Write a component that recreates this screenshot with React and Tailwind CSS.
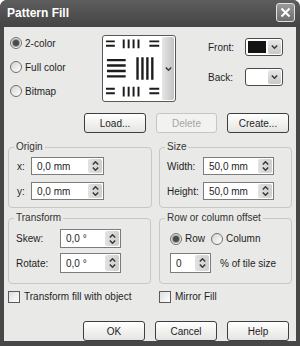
import React from 'react';

const Chev = ({ up = false, w = 7, h = 4 }) => (
  <svg width={w} height={h} viewBox="0 0 7 4" className="block">
    <path d={up ? 'M0.8 3.5 L3.5 0.8 L6.2 3.5' : 'M0.8 0.5 L3.5 3.2 L6.2 0.5'} stroke="#3a3a3a" strokeWidth="1.5" fill="none" />
  </svg>
);

function Radio({ checked, label }) {
  return (
    <div className="flex items-center gap-[3px]">
      <span className="w-[12px] h-[12px] rounded-full border border-[#707070] bg-gradient-to-br from-[#d4d4d4] to-white flex items-center justify-center">
        {checked && <span className="w-[6px] h-[6px] rounded-full bg-[#4a4a4a] ring-1 ring-[#9a9a9a]" />}
      </span>
      <span>{label}</span>
    </div>
  );
}

function Check({ label }) {
  return (
    <div className="flex items-center gap-[4px]">
      <span className="w-[12px] h-[12px] border border-[#5a5a5a] bg-gradient-to-br from-[#dedede] to-white" />
      <span>{label}</span>
    </div>
  );
}

function Button({ children, disabled }) {
  return (
    <div
      className={
        disabled
          ? 'w-[61px] h-[20px] rounded-[3px] border border-[#c6c6c6] bg-[#f2f2f0] text-[#a6a6a6] flex items-center justify-center'
          : 'w-[62px] h-[20px] rounded-[3px] border border-[#3e3e3e] bg-gradient-to-b from-white to-[#e4e4e2] flex items-center justify-center'
      }
    >
      {children}
    </div>
  );
}

function Spin({ value, w, h = 18 }) {
  return (
    <div className="flex border border-[#7c7c7c] bg-white" style={{ width: w, height: h }}>
      <span className="flex-1 pl-[5px] flex items-center">{value}</span>
      <div className="w-[14px] m-[1px] rounded-[2px] bg-gradient-to-r from-[#e2e2e2] to-[#cfcfcf] flex flex-col items-center justify-center gap-[2px]">
        <Chev up />
        <Chev />
      </div>
    </div>
  );
}

function Group({ title, w, h, children, className = '' }) {
  return (
    <div className={`relative border border-[#c8c8c6] rounded-[4px] ${className}`} style={{ width: w, height: h }}>
      <span className="absolute -top-[7px] left-[5px] px-[2px] bg-[#e9e9e7] leading-[12px] text-[#333]">{title}</span>
      {children}
    </div>
  );
}

function PatternBox() {
  return (
    <div className="mt-[8px] w-[74px] h-[67px] border border-[#585858] rounded-[3px] bg-white flex">
      <svg width="60" height="65" viewBox="0 0 60 65" className="block">
        <g stroke="#1c1c1c" strokeWidth="2">
          {/* top row */}
          <path d="M3 5 H12 M3 9.5 H12" />
          <path d="M21 3 V12 M26 3 V12 M31 3 V12 M36 3 V12" />
          <path d="M47 5 H57 M47 9.5 H57" />
          {/* middle */}
          <path d="M4 24 H23 M4 29.5 H23 M4 35 H23 M4 40.5 H23" strokeWidth="2.4" />
          <path d="M35 21 V44 M40 21 V44 M45 21 V44 M50 21 V44" strokeWidth="2.4" />
          {/* bottom row */}
          <path d="M3 53 H12 M3 57.5 H12" />
          <path d="M21 51 V61 M26 51 V61 M31 51 V61 M36 51 V61" />
          <path d="M47 53 H57 M47 57.5 H57" />
        </g>
      </svg>
      <div className="w-[12px] my-[1px] ml-auto mr-[1px] rounded-[2px] bg-gradient-to-r from-[#e6e6e6] to-[#c4c4c4] flex items-center justify-center">
        <Chev />
      </div>
    </div>
  );
}

function Swatch({ color }) {
  return (
    <div className="w-[38px] h-[18px] rounded-[3px] border border-[#4a4a4a] bg-white flex items-center pl-[2px] pr-[1px] gap-[2px]">
      <span className="w-[19px] h-[12px]" style={{ background: color }} />
      <span className="ml-auto w-[13px] h-[14px] rounded-[2px] bg-gradient-to-b from-[#e8e8e8] to-[#c8c8c8] flex items-center justify-center">
        <Chev />
      </span>
    </div>
  );
}

export default function App() {
  return (
    <div className="w-[300px] h-[346px] bg-[#474747] rounded-t-[7px] flex flex-col overflow-hidden font-['Liberation_Sans',Arial,sans-serif] text-[10px] text-[#1e1e1e]">
      {/* Title bar */}
      <div className="h-[27px] flex items-start justify-between pl-[7px] pr-[5px] bg-gradient-to-b from-[#5e5e5e] to-[#444444]">
        <span className="mt-[6px] text-[12px] font-bold text-white leading-[15px]">Pattern Fill</span>
        <span className="mt-[3px] w-[19px] h-[19px] rounded-[3px] border border-[#e0e0e0] bg-gradient-to-b from-[#9a9a9a] to-[#6e6e6e] flex items-center justify-center">
          <svg width="11" height="11" viewBox="0 0 11 11">
            <path d="M1.5 1.5 L9.5 9.5 M9.5 1.5 L1.5 9.5" stroke="white" strokeWidth="2" />
          </svg>
        </span>
      </div>

      {/* Body */}
      <div className="mx-[4px] mb-[5px] flex-1 bg-[#e9e9e7] flex flex-col">
        <div className="flex h-[80px]">
          <div className="w-[98px] pl-[6px] pt-[4px] flex flex-col">
            <div className="h-[24px] flex items-center"><Radio checked label="2-color" /></div>
            <div className="h-[24px] flex items-center"><Radio label="Full color" /></div>
            <div className="h-[24px] flex items-center"><Radio label="Bitmap" /></div>
          </div>
          <PatternBox />
          <div className="ml-[32px] pt-[11px] flex flex-col gap-[12px]">
            <div className="h-[18px] flex items-center">
              <span className="w-[37px]">Front:</span>
              <Swatch color="#141414" />
            </div>
            <div className="h-[18px] flex items-center">
              <span className="w-[37px]">Back:</span>
              <Swatch color="#ffffff" />
            </div>
          </div>
        </div>

        <div className="mt-[6px] flex justify-end gap-[10px] pr-[7px]">
          <Button>Load...</Button>
          <Button disabled>Delete</Button>
          <Button>Create...</Button>
        </div>

        {/* Origin / Size */}
        <div className="mt-[14px] pl-[4px] flex gap-[7px]">
          <Group title="Origin" w={144} h={61}>
            <div className="pt-[9px] pl-[8px] flex flex-col gap-[7px]">
              <div className="flex items-center">
                <span className="w-[14px]">x:</span>
                <Spin value="0,0 mm" w={73} />
              </div>
              <div className="flex items-center">
                <span className="w-[14px]">y:</span>
                <Spin value="0,0 mm" w={73} />
              </div>
            </div>
          </Group>
          <Group title="Size" w={133} h={61}>
            <div className="pt-[9px] pl-[7px] flex flex-col gap-[7px]">
              <div className="flex items-center">
                <span className="w-[36px]">Width:</span>
                <Spin value="50,0 mm" w={71} />
              </div>
              <div className="flex items-center">
                <span className="w-[36px]">Height:</span>
                <Spin value="50,0 mm" w={71} />
              </div>
            </div>
          </Group>
        </div>

        {/* Transform / Offset */}
        <div className="mt-[10px] pl-[4px] flex gap-[8px]">
          <Group title="Transform" w={143} h={66}>
            <div className="pt-[10px] pl-[7px] flex flex-col gap-[5px]">
              <div className="flex items-center">
                <span className="w-[44px]">Skew:</span>
                <Spin value="0,0 °" w={61} h={19} />
              </div>
              <div className="flex items-center">
                <span className="w-[44px]">Rotate:</span>
                <Spin value="0,0 °" w={61} h={20} />
              </div>
            </div>
          </Group>
          <Group title="Row or column offset" w={133} h={66}>
            <div className="pt-[10px] pl-[10px] flex flex-col gap-[5px]">
              <div className="h-[19px] flex items-center">
                <div className="w-[41px]"><Radio checked label="Row" /></div>
                <Radio label="Column" />
              </div>
              <div className="flex items-center gap-[9px]">
                <Spin value="0" w={41} h={20} />
                <span>% of tile size</span>
              </div>
            </div>
          </Group>
        </div>

        <div className="mt-[5px] pl-[4px] flex gap-[7px]">
          <div className="w-[144px]"><Check label="Transform fill with object" /></div>
          <Check label="Mirror Fill" />
        </div>

        <div className="mt-[17px] flex justify-end gap-[10px] pr-[7px]">
          <Button>OK</Button>
          <Button>Cancel</Button>
          <Button>Help</Button>
        </div>
      </div>
    </div>
  );
}
